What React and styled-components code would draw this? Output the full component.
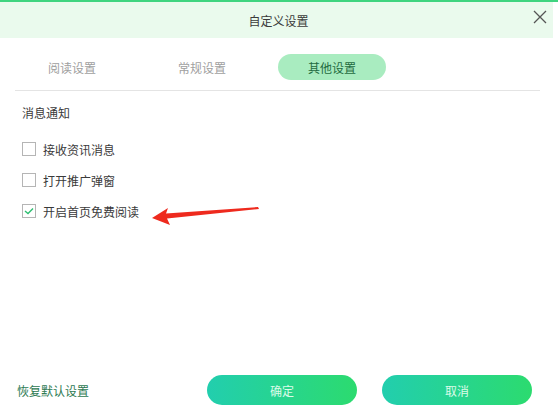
import React, { useState } from 'react';
import styled, { createGlobalStyle } from 'styled-components';

const GlobalStyle = createGlobalStyle`
  html, body {
    margin: 0;
    padding: 0;
    background: #ffffff;
  }
  body {
    font-family: "Microsoft YaHei", "Noto Sans CJK SC", "Noto Sans", sans-serif;
  }
`;

const Page = styled.div`
  width: 558px;
  height: 407px;
  border-top: 2px solid #3fd47f;
  box-sizing: border-box;
  position: relative;
  overflow: hidden;
`;

const Dialog = styled.div`
  width: 553px;
  height: 405px;
  display: flex;
  flex-direction: column;
`;

const Header = styled.div`
  height: 36px;
  background: #eafaed;
  display: grid;
  grid-template-columns: 1fr auto 1fr;
  align-items: center;
`;

const Title = styled.div`
  grid-column: 2;
  font-size: 12px;
  color: #3a3a3a;
  padding-left: 4px;
`;

const CloseButton = styled.button`
  grid-column: 3;
  justify-self: end;
  margin-right: 4px;
  margin-top: -4px;
  width: 16px;
  height: 16px;
  padding: 0;
  border: 0;
  background: transparent;
  cursor: pointer;
  display: flex;
`;

const Tabs = styled.div`
  display: flex;
  gap: 22px;
  padding: 16px 0 10px 18px;
  margin: 0 13px 0 15px;
  border-bottom: 1px solid #e4e4e4;
`;

const Tab = styled.div`
  width: 108px;
  height: 26px;
  border-radius: 13px;
  display: flex;
  align-items: center;
  justify-content: center;
  font-size: 12px;
  margin-left: ${p => (p.$first ? '-15px' : '0')};
  background: ${p => (p.$active ? '#a9ecc0' : 'transparent')};
  color: ${p => (p.$active ? '#1f6b3f' : '#a0a0a0')};
`;

const Content = styled.div`
  flex: 1;
  padding: 14px 22px 0;
  display: flex;
  flex-direction: column;
`;

const SectionTitle = styled.div`
  font-size: 12px;
  color: #3a3a3a;
  height: 16px;
  line-height: 16px;
  margin-bottom: 20px;
`;

const Options = styled.div`
  display: flex;
  flex-direction: column;
  gap: 15px;
`;

const Option = styled.label`
  display: flex;
  align-items: center;
  gap: 7px;
  font-size: 12px;
  color: #3a3a3a;
  height: 16px;
  cursor: pointer;
`;

const Box = styled.span`
  width: 12px;
  height: 12px;
  border: 1px solid #b5b5b5;
  background: #fff;
  display: flex;
  align-items: center;
  justify-content: center;
`;

const Footer = styled.div`
  display: flex;
  align-items: center;
  padding: 0 21px 1px 17px;
  height: 32px;
`;

const ResetLink = styled.div`
  font-size: 12px;
  color: #2d7a52;
  margin-right: auto;
`;

const Pill = styled.button`
  width: 150px;
  height: 30px;
  border-radius: 15px;
  border: 0;
  margin-left: ${p => p.$gap || '0'};
  background: linear-gradient(90deg, #22ceae 0%, #2cdb6f 100%);
  color: #dcfbe9;
  font-size: 12px;
  font-family: inherit;
  cursor: pointer;
`;

const ArrowLayer = styled.svg`
  position: absolute;
  left: 150px;
  top: 198px;
`;

const options = [
  { label: '接收资讯消息', checked: false },
  { label: '打开推广弹窗', checked: false },
  { label: '开启首页免费阅读', checked: true },
];

const App = () => {
  const [state, setState] = useState(options.map(o => o.checked));

  return (
    <Page>
      <GlobalStyle />
      <Dialog>
        <Header>
          <Title>自定义设置</Title>
          <CloseButton>
            <svg width="14" height="14" viewBox="0 0 14 14">
              <path d="M1 1L13 13M13 1L1 13" stroke="#555" strokeWidth="1.3" />
            </svg>
          </CloseButton>
        </Header>
        <Tabs>
          <Tab $first>阅读设置</Tab>
          <Tab>常规设置</Tab>
          <Tab $active>其他设置</Tab>
        </Tabs>
        <Content>
          <SectionTitle>消息通知</SectionTitle>
          <Options>
            {options.map((o, i) => (
              <Option key={o.label} onClick={() => setState(s => s.map((v, j) => (j === i ? !v : v)))}>
                <Box>
                  {state[i] && (
                    <svg width="10" height="8" viewBox="0 0 10 8">
                      <path d="M1 4L4 6.5L9 1.5" fill="none" stroke="#2fbf72" strokeWidth="1.4" />
                    </svg>
                  )}
                </Box>
                {o.label}
              </Option>
            ))}
          </Options>
        </Content>
        <Footer>
          <ResetLink>恢复默认设置</ResetLink>
          <Pill>确定</Pill>
          <Pill $gap="25px">取消</Pill>
        </Footer>
      </Dialog>
      <ArrowLayer width="115" height="28" viewBox="0 0 115 28">
        <path d="M2 18L18 8L16 13.5L108 7L109 9L17 18.5L20 25Z" fill="#ee2a1e" />
      </ArrowLayer>
    </Page>
  );
};

export default App;
